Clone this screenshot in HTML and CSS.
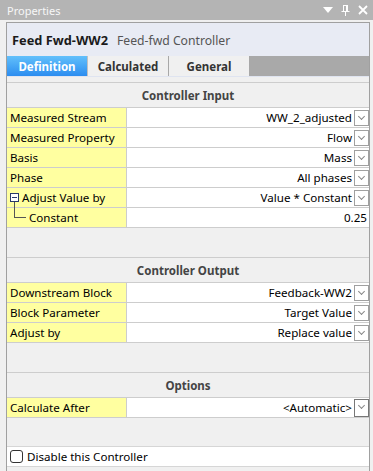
FILE: index.html
```html
<!DOCTYPE html>
<html>
<head>
<meta charset="utf-8">
<link rel="stylesheet" href="styles.css">
</head>
<body>
<div class="titlebar">
  <span class="title">Properties</span>
  <span class="tb-icons">
    <svg width="10" height="6" viewBox="0 0 10 6"><path d="M0 0H10L5 6Z" fill="#fff"/></svg>
    <svg width="9" height="11" viewBox="0 0 9 11"><path d="M2 0.5H7M2.5 0.5V6M6.5 0.5V6M5.5 0.5V6M0.5 6.5H8.5M4.5 6.5V11" stroke="#fff" fill="none"/></svg>
    <svg width="10" height="10" viewBox="0 0 10 10"><path d="M1 1L9 9M9 1L1 9" stroke="#fff" stroke-width="1.8"/></svg>
  </span>
</div>
<div class="panel">
  <div class="head">
    <span class="name">Feed Fwd-WW2</span>
    <span class="type">Feed-fwd Controller</span>
  </div>
  <div class="tabs">
    <div class="tab active">Definition</div>
    <div class="tab">Calculated</div>
    <div class="tab">General</div>
    <div class="tab-fill"></div>
  </div>
  <div class="content">
    <div class="section">
      <div class="sec-head">Controller Input</div>
      <div class="row"><div class="lbl">Measured Stream</div><div class="val"><span>WW_2_adjusted</span><span class="dd"></span></div></div>
      <div class="row"><div class="lbl">Measured Property</div><div class="val"><span>Flow</span><span class="dd"></span></div></div>
      <div class="row"><div class="lbl">Basis</div><div class="val"><span>Mass</span><span class="dd"></span></div></div>
      <div class="row"><div class="lbl">Phase</div><div class="val"><span>All phases</span><span class="dd"></span></div></div>
      <div class="row"><div class="lbl tree"><span class="minus"></span><span class="tree-vline"></span>Adjust Value by</div><div class="val"><span>Value * Constant</span><span class="dd"></span></div></div>
      <div class="row"><div class="lbl child"><span class="tree-elbow"></span>Constant</div><div class="val plain"><span>0.25</span></div></div>
    </div>
    <div class="section">
      <div class="sec-head">Controller Output</div>
      <div class="row"><div class="lbl">Downstream Block</div><div class="val"><span>Feedback-WW2</span><span class="dd"></span></div></div>
      <div class="row"><div class="lbl">Block Parameter</div><div class="val"><span>Target Value</span><span class="dd"></span></div></div>
      <div class="row"><div class="lbl">Adjust by</div><div class="val"><span>Replace value</span><span class="dd"></span></div></div>
    </div>
    <div class="section">
      <div class="sec-head">Options</div>
      <div class="row"><div class="lbl">Calculate After</div><div class="val"><span>&lt;Automatic&gt;</span><span class="dd big"></span></div></div>
    </div>
    <div class="check-row">
      <span class="checkbox"></span>
      <span>Disable this Controller</span>
    </div>
  </div>
</div>
</body>
</html>
```

FILE: styles.css
```css
* { box-sizing: border-box; }
html, body { margin: 0; padding: 0; }
body {
  width: 373px;
  height: 471px;
  overflow: hidden;
  background: #f0f0f0;
  font-family: "Noto Sans", "Open Sans", sans-serif;
  font-size: 11.6px;
  color: #000;
}
.titlebar {
  height: 20px;
  background: #b4b4b4;
  display: flex;
  align-items: center;
  justify-content: space-between;
  padding: 0 5px 0 7px;
  color: #f7f7f7;
  font-size: 11px;
}
.tb-icons { display: flex; align-items: center; gap: 8px; }
.panel {
  margin: 2px 3px 0 6px;
  border: 1px solid #a0a0a0;
  border-bottom: none;
  height: 449px;
  background: #f0f0f0;
}
.head {
  height: 33px;
  background: #e8ebf4;
  display: flex;
  align-items: center;
  padding: 1px 0 0 5px;
  gap: 9px;
}
.name { font-weight: bold; font-size: 12.8px; color: #1b1b1b; }
.type { font-size: 12.2px; color: #555; }
.tabs {
  display: flex;
  height: 21px;
  border-bottom: 1px solid #dfe4f0;
  background: #e8ebf4;
}
.tab {
  width: 81px;
  height: 20px;
  display: flex;
  align-items: center;
  justify-content: center;
  font-weight: bold;
  font-size: 11.5px;
  color: #333;
  background: #f0f0f0;
  border-right: 1px solid #a8a8a8;
}
.tab.active {
  background: linear-gradient(#62c0fb, #2c8df0);
  color: #fff;
  border-right: 1px solid #c0c0c0;
}
.tab-fill { flex: 1; height: 20px; background: #a9a9a9; }
.content { padding-top: 5px; }
.section { border-top: 1px solid #cdcdcd; margin-bottom: 29px; }
.sec-head {
  height: 25px;
  display: flex;
  align-items: center;
  justify-content: center;
  font-weight: bold;
  font-size: 11.5px;
  color: #444;
  border-bottom: 1px solid #cdcdcd;
}
.row {
  display: grid;
  grid-template-columns: 120px 1fr;
  height: 20px;
  border-bottom: 1px solid #cdcdcd;
}
.lbl {
  background: #ffffa0;
  border-right: 1px solid #cdcdcd;
  display: flex;
  align-items: center;
  padding-left: 3px;
  position: relative;
}
.val {
  background: #fff;
  display: flex;
  align-items: center;
  justify-content: flex-end;
  gap: 2px;
  padding-right: 0;
}
.val.plain { padding-right: 2px; }
.dd {
  width: 15px;
  height: 16px;
  border: 1px solid #a0a0a0;
  background: #fff;
  position: relative;
}
.dd::after {
  content: "";
  position: absolute;
  left: 4px;
  top: 3px;
  width: 4px;
  height: 4px;
  border-right: 1px solid #888;
  border-bottom: 1px solid #888;
  transform: rotate(45deg);
}
.dd.big { height: 18px; border-color: #777; }
.lbl.tree { padding-left: 15px; }
.minus {
  position: absolute;
  left: 3px;
  top: 5px;
  width: 9px;
  height: 9px;
  border: 1px solid #2a3a6a;
  background: #fff;
}
.minus::after {
  content: "";
  position: absolute;
  left: 1px;
  top: 3px;
  width: 5px;
  height: 1px;
  background: #2a3a6a;
}
.tree-vline {
  position: absolute;
  left: 7px;
  top: 14px;
  height: 6px;
  width: 1px;
  background: #555;
}
.lbl.child { padding-left: 22px; }
.tree-elbow {
  position: absolute;
  left: 7px;
  top: 0;
  width: 12px;
  height: 10px;
  border-left: 1px solid #555;
  border-bottom: 1px solid #555;
}
.check-row {
  height: 21px;
  background: #fff;
  border-top: 1px solid #d6d6d6;
  border-bottom: 1px solid #d6d6d6;
  display: flex;
  align-items: center;
  padding-left: 3px;
  gap: 4px;
  margin-top: -1px;
}
.checkbox {
  width: 13px;
  height: 13px;
  border: 1px solid #333;
  border-radius: 3px;
  background: #fff;
}
```
